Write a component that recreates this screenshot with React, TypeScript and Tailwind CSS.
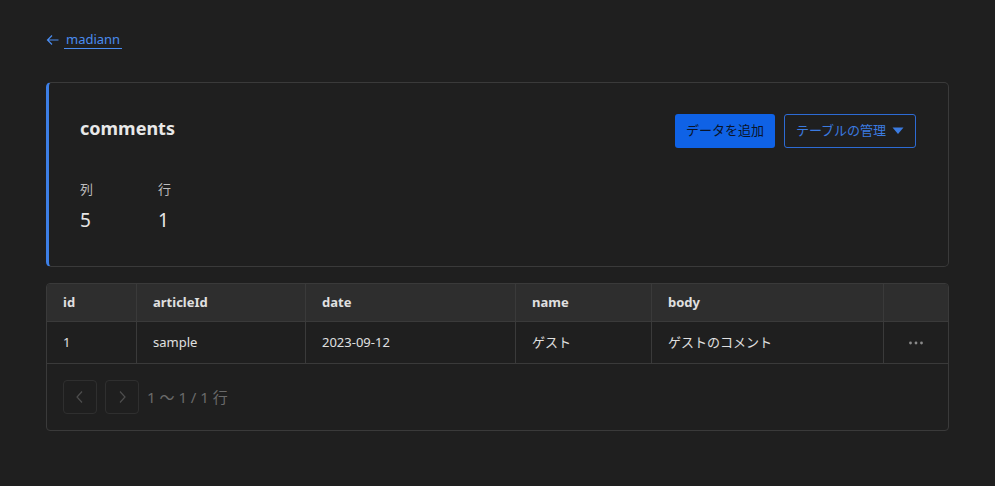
import React from 'react';

const columns = [
    { key: 'id', label: 'id', width: 'w-[90px]' },
    { key: 'articleId', label: 'articleId', width: 'w-[169px]' },
    { key: 'date', label: 'date', width: 'w-[210px]' },
    { key: 'name', label: 'name', width: 'w-[136px]' },
    { key: 'body', label: 'body', width: 'w-[232px]' },
];

const rows = [
    { id: '1', articleId: 'sample', date: '2023-09-12', name: 'ゲスト', body: 'ゲストのコメント' },
];

const App: React.FC = () => {
    return (
        <div
            className="min-h-[486px] bg-[#1f1f1f] text-[#e6e6e6] pl-[46px] pr-[46px] pt-[29px]"
            style={{ fontFamily: '"Noto Sans", "Noto Sans CJK JP", sans-serif' }}
        >
            <a href="#" className="inline-flex items-center gap-[4px] text-[13px] text-[#4a8cf0] h-[22px]">
                <svg width="14" height="14" viewBox="0 0 14 14" fill="none" stroke="currentColor" strokeWidth="1.2">
                    <path d="M12.5 7H1.5M6 2.5L1.5 7L6 11.5" />
                </svg>
                <span className="border-b border-[#4a8cf0] leading-[17px] px-[2px]">madiann</span>
            </a>

            {/* table info card */}
            <div className="mt-[29px] h-[185px] border border-[#3a3a3a] border-l-[3px] border-l-[#3d7fe6] rounded-[5px] pl-[31px] pr-[32px] pt-[31px]">
                <div className="flex items-start justify-between">
                    <h1 className="text-[18px] font-bold leading-[28px] text-[#e8e8e8]">comments</h1>
                    <div className="flex gap-[9px]">
                        <button className="h-[34px] w-[100px] rounded-[3px] bg-[#0f62e6] text-[13px] text-[#0a1429]">
                            データを追加
                        </button>
                        <button className="h-[34px] w-[132px] rounded-[3px] border border-[#2d6bd4] text-[13px] text-[#3b7be0] flex items-center justify-center gap-[6px]">
                            テーブルの管理
                            <svg width="12" height="8" viewBox="0 0 12 8">
                                <path d="M0.5 0.5H11.5L6 7Z" fill="#3b7be0" />
                            </svg>
                        </button>
                    </div>
                </div>
                <div className="flex gap-[60px] mt-[32px]">
                    <div className="w-[18px]">
                        <div className="text-[13px] text-[#bdbdbd] leading-[18px]">列</div>
                        <div className="text-[19px] leading-[26px] mt-[9px]">5</div>
                    </div>
                    <div>
                        <div className="text-[13px] text-[#bdbdbd] leading-[18px]">行</div>
                        <div className="text-[19px] leading-[26px] mt-[9px]">1</div>
                    </div>
                </div>
            </div>

            {/* data table */}
            <div className="mt-[16px] border border-[#3a3a3a] rounded-[4px] overflow-hidden">
                <div className="flex h-[38px] bg-[#2e2e2e] border-b border-[#3a3a3a] text-[13px] font-bold text-[#e0e0e0]">
                    {columns.map(col => (
                        <div key={col.key} className={`${col.width} shrink-0 border-r border-[#3a3a3a] pl-[16px] flex items-center`}>
                            {col.label}
                        </div>
                    ))}
                    <div className="grow" />
                </div>
                {rows.map(row => (
                    <div key={row.id} className="flex h-[42px] border-b border-[#3a3a3a] text-[13px] text-[#e0e0e0]">
                        {columns.map(col => (
                            <div key={col.key} className={`${col.width} shrink-0 border-r border-[#3a3a3a] pl-[16px] flex items-center`}>
                                {row[col.key as keyof typeof row]}
                            </div>
                        ))}
                        <div className="grow flex items-center justify-center">
                            <svg width="16" height="4" viewBox="0 0 16 4" fill="#8a8a8a">
                                <circle cx="2.5" cy="2" r="1.4" />
                                <circle cx="8" cy="2" r="1.4" />
                                <circle cx="13.5" cy="2" r="1.4" />
                            </svg>
                        </div>
                    </div>
                ))}
                <div className="h-[66px] flex items-center pl-[16px] gap-[8px]">
                    <button className="w-[34px] h-[34px] rounded-[4px] border border-[#2f2f2f] flex items-center justify-center text-[#4d4d4d]">
                        <svg width="10" height="14" viewBox="0 0 10 14" fill="none" stroke="currentColor" strokeWidth="1.2">
                            <path d="M7 1.5L2 7L7 12.5" />
                        </svg>
                    </button>
                    <button className="w-[34px] h-[34px] rounded-[4px] border border-[#2f2f2f] flex items-center justify-center text-[#4d4d4d]">
                        <svg width="10" height="14" viewBox="0 0 10 14" fill="none" stroke="currentColor" strokeWidth="1.2">
                            <path d="M3 1.5L8 7L3 12.5" />
                        </svg>
                    </button>
                    <span className="text-[15px] text-[#6a6a6a] whitespace-pre">1 〜 1 / 1 行</span>
                </div>
            </div>
        </div>
    );
};

export default App;
